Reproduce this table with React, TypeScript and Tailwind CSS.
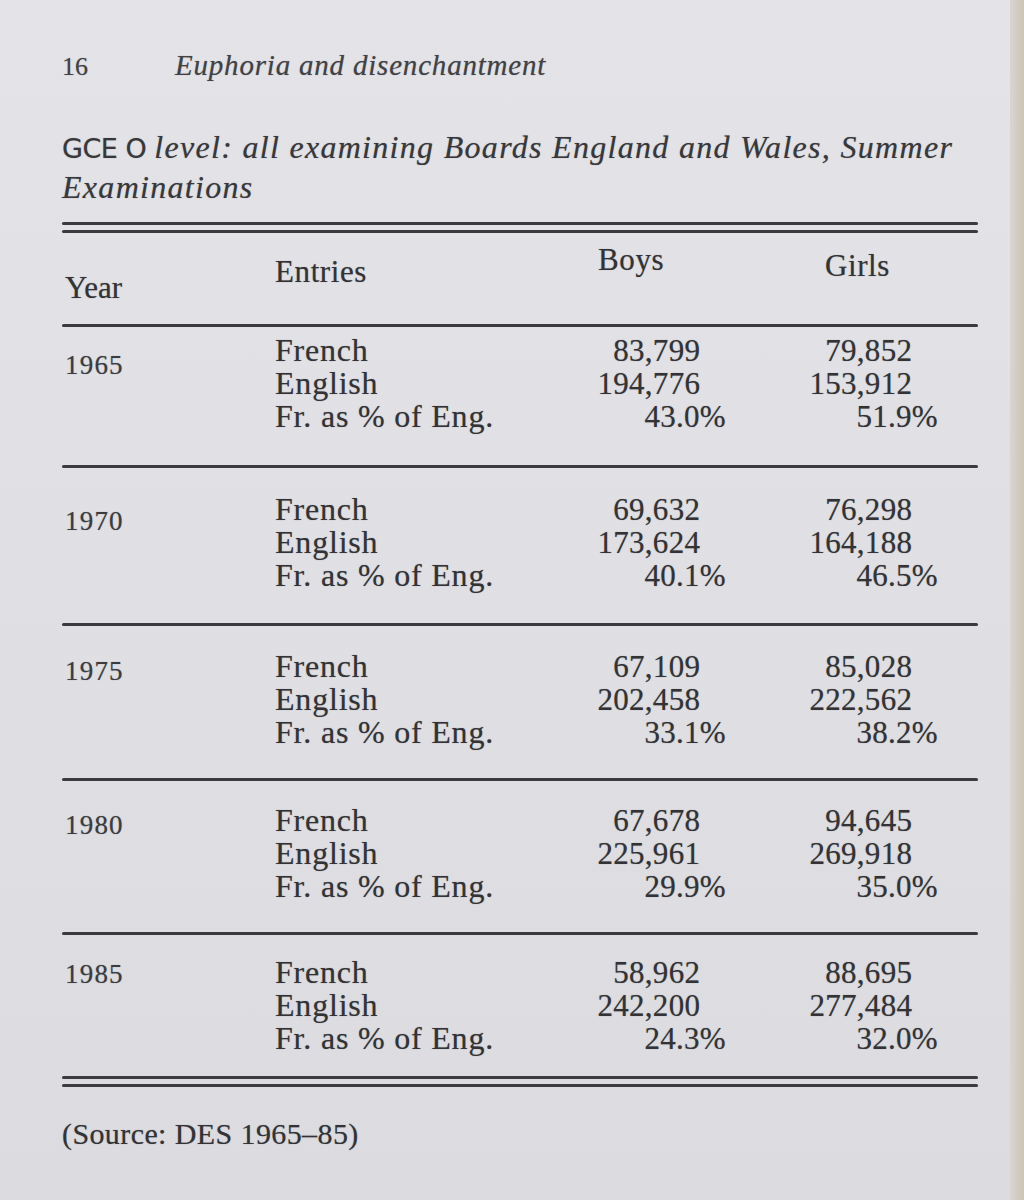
import React from "react";

type Block = {
  year: string;
  boys: [string, string, string];
  girls: [string, string, string];
  pad: string;
  yearPad: string;
};

const blocks: Block[] = [
  { year: "1965", boys: ["83,799", "194,776", "43.0%"], girls: ["79,852", "153,912", "51.9%"], pad: "pt-[7px] pb-[32px]", yearPad: "pt-[15px]" },
  { year: "1970", boys: ["69,632", "173,624", "40.1%"], girls: ["76,298", "164,188", "46.5%"], pad: "pt-[25px] pb-[31px]", yearPad: "pt-[12px]" },
  { year: "1975", boys: ["67,109", "202,458", "33.1%"], girls: ["85,028", "222,562", "38.2%"], pad: "pt-[24px] pb-[29px]", yearPad: "pt-[5px]" },
  { year: "1980", boys: ["67,678", "225,961", "29.9%"], girls: ["94,645", "269,918", "35.0%"], pad: "pt-[23px] pb-[29px]", yearPad: "pt-[5px]" },
  { year: "1985", boys: ["58,962", "242,200", "24.3%"], girls: ["88,695", "277,484", "32.0%"], pad: "pt-[21px] pb-[21px]", yearPad: "pt-[2px]" },
];

const entries = ["French", "English", "Fr. as % of Eng."];

function Rule() {
  return <div className="h-[3px] w-full bg-[#3b3b3e] rounded-full" />;
}

function DoubleRule() {
  return (
    <div className="flex flex-col gap-[5px]">
      <div className="h-[3px] w-full bg-[#3b3b3e] rounded-full" />
      <div className="h-[3px] w-full bg-[#3b3b3e] rounded-full" />
    </div>
  );
}

function NumCol({ vals }: { vals: [string, string, string] }) {
  return (
    <div className="flex flex-col items-end tracking-[0.3px]">
      <div className="pr-[0.83em]">{vals[0]}</div>
      <div className="pr-[0.83em]">{vals[1]}</div>
      <div>{vals[2]}</div>
    </div>
  );
}

export default function App() {
  return (
    <div className="w-[1024px] min-h-[1200px] flex bg-[#e1e0e5] text-[#333336] font-['Liberation_Serif',serif] [text-shadow:0_0_1px_rgba(40,40,45,0.45)]">
      <div className="flex-1 bg-gradient-to-b from-[#e4e3e8] via-[#e0dfe4] to-[#dcdbe0]">
        <div className="ml-[62px] w-[916px]">
          {/* running head */}
          <div className="pt-[50px] flex items-baseline text-[29px] leading-[30px] text-[#424245]">
            <span className="w-[113px] text-[26px]">16</span>
            <span className="italic tracking-[0.8px]">Euphoria and disenchantment</span>
          </div>

          {/* title */}
          <div className="mt-[46px] text-[32px] leading-[38px] italic tracking-[1.3px] text-[#38383b]">
            <div className="whitespace-nowrap">
              <span className="not-italic font-['DejaVu_Sans',sans-serif] text-[27px] tracking-[-0.5px]">GCE O </span>
              level: all examining Boards England and Wales, Summer
            </div>
            <div>Examinations</div>
          </div>

          <div className="mt-[16px]">
            <DoubleRule />
          </div>

          {/* column headings */}
          <div className="grid grid-cols-[213px_250px_201px_252px] text-[31px] leading-[33px] pt-[10px] pb-[20px]">
            <div className="pt-[28px] pl-[3px]">Year</div>
            <div className="pt-[12px] tracking-[0.6px]">Entries</div>
            <div className="pl-[73px] tracking-[0.6px]">Boys</div>
            <div className="pl-[99px] pt-[6px] tracking-[0.6px]">Girls</div>
          </div>
          <Rule />

          {blocks.map((b, i) => (
            <div key={b.year}>
              <div className={"grid grid-cols-[213px_250px_201px_212px] text-[31px] leading-[33px] " + b.pad}>
                <div className={"text-[27px] pl-[3px] tracking-[1.2px] text-[#3c3c3f] " + b.yearPad}>{b.year}</div>
                <div className="flex flex-col text-[32px] tracking-[0.8px]">
                  {entries.map((e) => (
                    <div key={e} className="whitespace-nowrap">{e}</div>
                  ))}
                </div>
                <NumCol vals={b.boys} />
                <NumCol vals={b.girls} />
              </div>
              {i < blocks.length - 1 ? <Rule /> : <DoubleRule />}
            </div>
          ))}

          <div className="mt-[30px] text-[30px] leading-[33px] tracking-[0.4px]">(Source: DES 1965–85)</div>
        </div>
      </div>
      <div className="w-[14px] bg-gradient-to-r from-[#d9d5d2] to-[#cdc4b6]" />
    </div>
  );
}
